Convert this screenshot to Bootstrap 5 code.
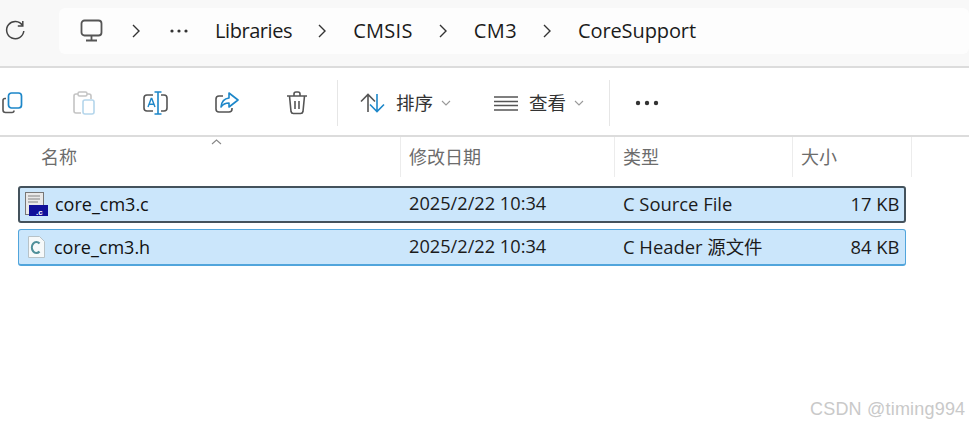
<!DOCTYPE html>
<html lang="zh">
<head>
<meta charset="utf-8">
<title>CoreSupport</title>
<link href="https://cdn.jsdelivr.net/npm/bootstrap@5.3.0/dist/css/bootstrap.min.css" rel="stylesheet">
<style>
html,body{width:969px;height:425px;overflow:hidden;background:#fff;}
body{font-family:"Open Sans","Noto Sans CJK SC",sans-serif;color:#1b1b1b;position:relative;}
svg{display:block;flex:none;fill:none;}
.topbar{background:#f8f8f8;border-bottom:2px solid #dcdcdc;padding:8px 0 0 4px;box-sizing:content-box;height:58px;}
.crumbs{margin-left:33px;width:910px;height:46px;background:#fdfdfd;border-radius:6px;padding-left:21px;font-size:20px;letter-spacing:-.1px;}
.ml2{margin-left:2px}.ml8{margin-left:8px}.ml11{margin-left:11px}.ml22{margin-left:22px}.ml25{margin-left:25px}.ml26{margin-left:26px}.ml27{margin-left:27px}.ml28{margin-left:28px}.ml29{margin-left:29px}.ml30{margin-left:30px}.ml43{margin-left:43px}.ml47{margin-left:47px}.ml48{margin-left:48px}.ml50{margin-left:50px}
.w-lib{letter-spacing:-.43px}.w-cmsis{letter-spacing:.3px}.w-cm3{letter-spacing:.4px}
.tools{height:69px;border-bottom:2px solid #dcdcdc;font-size:18.5px;color:#333;padding-top:3px;}
.vsep{width:1px;height:46px;background:#e6e6e6;}
.head{height:40px;font-size:18px;color:#6c6c6c;position:relative;}
.hcell{height:40px;border-right:1px solid #ececec;padding-left:8px;line-height:40px;}
.c1{width:401px;padding-left:41px}.c2{width:214px}.c3{width:178px}.c4{width:119px}
.sort-mark{position:absolute;left:211px;top:2px;}
.files{padding:9px 0 0 18px;}
.file{width:888px;height:37px;background:#cbe6fb;border:1px solid #51a5dc;border-bottom-width:2px;border-radius:3px;margin-bottom:6px;font-size:18.4px;color:#1b1b1b;line-height:33px;}
.file.focused{border:2px solid #44525c;line-height:31px;}
.n1{width:390px;color:#111;}
.focused .n1{width:389px;padding-left:5px}
.file:not(.focused) .n1{padding-left:9px}
.n2{width:214px;font-size:18.2px}.n3{width:178px}.n4{width:98.5px;text-align:right;}
.fname{font-size:18px;margin-left:9px}
.focused .fname{margin-left:7px}
.watermark{position:absolute;left:810px;top:396px;font-family:"Liberation Sans",sans-serif;font-size:18px;color:#c9c9c9;letter-spacing:.2px;white-space:nowrap;}
</style>
</head>
<body>
<div class="topbar d-flex align-items-start">
  <svg class="mt-2" width="22" height="30" viewBox="0 0 22 30"><path d="M18.5 9.5A8.6 8.6 0 1 0 19.8 15" stroke="#444" stroke-width="1.5"/><path d="M18.800 5v5h-5" stroke="#444" stroke-width="1.5"/></svg>
  <div class="crumbs d-flex align-items-center">
    <svg width="24" height="24" viewBox="0 0 24 24"><rect x="1.500" y="1.500" width="20" height="15" rx="3" stroke="#555" stroke-width="1.800"/><path d="M11.500 17v4M6 21.500h11" stroke="#555" stroke-width="1.800"/></svg>
    <svg class="ml28" width="8" height="14" viewBox="0 0 8 14"><path d="M1 1l6 6-6 6" stroke="#333" stroke-width="1.400"/></svg>
    <svg class="ml30" width="18" height="4" viewBox="0 0 18 4"><circle cx="2" cy="2" r="1.600" fill="#333"/><circle cx="9" cy="2" r="1.600" fill="#333"/><circle cx="16" cy="2" r="1.600" fill="#333"/></svg>
    <span class="ml27 w-lib">Libraries</span>
    <svg class="ml26" width="8" height="14" viewBox="0 0 8 14"><path d="M1 1l6 6-6 6" stroke="#333" stroke-width="1.400"/></svg>
    <span class="ml27 w-cmsis">CMSIS</span>
    <svg class="ml26" width="8" height="14" viewBox="0 0 8 14"><path d="M1 1l6 6-6 6" stroke="#333" stroke-width="1.400"/></svg>
    <span class="ml27 w-cm3">CM3</span>
    <svg class="ml26" width="8" height="14" viewBox="0 0 8 14"><path d="M1 1l6 6-6 6" stroke="#333" stroke-width="1.400"/></svg>
    <span class="ml27">CoreSupport</span>
  </div>
</div>
<div class="tools d-flex align-items-center">
  <svg class="ml2" width="21" height="22" viewBox="0 0 21 22"><path d="M4 6.500H3a2 2 0 0 0-2 2V18a2.500 2.500 0 0 0 2.500 2.500H10a2 2 0 0 0 2-2" stroke="#555" stroke-width="1.600"/><rect x="6.500" y="1" width="13" height="15" rx="3" stroke="#1d87c9" stroke-width="1.700"/></svg>
  <svg class="ml50" width="22" height="24" viewBox="0 0 22 24"><path d="M5 3H3a2 2 0 0 0-2 2v15a2 2 0 0 0 2 2h5M14 3h2a2 2 0 0 1 2 2v3" stroke="#c4c4c4" stroke-width="1.600"/><rect x="5" y="1" width="9" height="4" rx="1.500" stroke="#c4c4c4" stroke-width="1.500"/><rect x="10" y="9" width="11" height="14" rx="2" stroke="#b5d6ec" stroke-width="1.600"/></svg>
  <svg class="ml48" width="25" height="24" viewBox="0 0 25 24"><path d="M10 4H4a3 3 0 0 0-3 3v10a3 3 0 0 0 3 3h6M18 4h3a3 3 0 0 1 3 3v10a3 3 0 0 1-3 3h-3" stroke="#555" stroke-width="1.600"/><path d="M15 1v22M11.500 1h7M11.500 23h7" stroke="#1d87c9" stroke-width="1.600"/><path d="M5 16l3.200-8.500h.6L12 16M6.200 13.200h4.600" stroke="#1d87c9" stroke-width="1.400"/></svg>
  <svg class="ml47" width="24" height="22" viewBox="0 0 24 22"><path d="M8 4H4a3 3 0 0 0-3 3v10a3 3 0 0 0 3 3h10a3 3 0 0 0 3-3v-1" stroke="#555" stroke-width="1.600"/><path d="M14 1l9 7-9 7v-4c-4 0-6 1-8 4 .5-5 3-8.500 8-9z" stroke="#1d87c9" stroke-width="1.600" stroke-linejoin="round"/></svg>
  <svg class="ml47" width="22" height="24" viewBox="0 0 22 24"><path d="M1 5h20M8 4.500V3a2 2 0 0 1 2-2h2a2 2 0 0 1 2 2v1.500M3.500 5l1.500 15.500a2.500 2.500 0 0 0 2.500 2h7a2.500 2.500 0 0 0 2.500-2L18.500 5M9 10v8M13 10v8" stroke="#555" stroke-width="1.600"/></svg>
  <div class="vsep ml29"></div>
  <svg class="ml22" width="25" height="20" viewBox="0 0 25 20"><path d="M8 19V1.500M1 8.500l7-7 7 7" stroke="#555" stroke-width="1.600"/><path d="M17 1v17.500M10 11.500l7 7 7-7" stroke="#1d87c9" stroke-width="1.600"/></svg>
  <span class="ml11">排序</span>
  <svg class="ml8" width="10" height="6" viewBox="0 0 10 6"><path d="M1 1l4 4 4-4" stroke="#999" stroke-width="1.100"/></svg>
  <svg class="ml43" width="24" height="15" viewBox="0 0 24 15"><path d="M0 1h24M0 5.500h24M0 9.500h24M0 14h24" stroke="#555" stroke-width="1.300"/></svg>
  <span class="ml11">查看</span>
  <svg class="ml8" width="10" height="6" viewBox="0 0 10 6"><path d="M1 1l4 4 4-4" stroke="#999" stroke-width="1.100"/></svg>
  <div class="vsep ml25"></div>
  <svg class="ml25" width="24" height="6" viewBox="0 0 24 6"><circle cx="3" cy="3" r="2.200" fill="#333"/><circle cx="12" cy="3" r="2.200" fill="#333"/><circle cx="21" cy="3" r="2.200" fill="#333"/></svg>
</div>
<div class="head d-flex">
  <svg class="sort-mark" width="11" height="6" viewBox="0 0 11 6"><path d="M1 5l4.500-4L10 5" stroke="#888" stroke-width="1.100"/></svg>
  <div class="hcell c1">名称</div>
  <div class="hcell c2">修改日期</div>
  <div class="hcell c3">类型</div>
  <div class="hcell c4">大小</div>
</div>
<div class="files">
  <div class="file focused d-flex">
    <div class="n1 d-flex align-items-center">
      <svg width="23" height="25" viewBox="0 0 23 25"><rect x=".5" y=".5" width="18" height="22" fill="#e9e9e9" stroke="#777"/><path d="M3 4h12M3 7h12M3 10h10" stroke="#a5a5a5" stroke-width="1.500"/><rect x="4" y="13" width="19" height="11" fill="#10109a"/><text x="11" y="22.500" font-size="8" font-weight="700" fill="#fff" font-family="Liberation Sans">.c</text></svg>
      <span class="fname">core_cm3.c</span>
    </div>
    <div class="n2">2025/2/22 10:34</div>
    <div class="n3">C Source File</div>
    <div class="n4">17 KB</div>
  </div>
  <div class="file d-flex">
    <div class="n1 d-flex align-items-center">
      <svg width="17" height="22" viewBox="0 0 17 22"><path d="M.5.5h11l5 5v16H.5z" fill="#f6f9fa" stroke="#b7c2c7"/><path d="M11.500 7.500a4.500 5.500 0 1 0 0 8" stroke="#4f8f99" stroke-width="2.200"/></svg>
      <span class="fname">core_cm3.h</span>
    </div>
    <div class="n2">2025/2/22 10:34</div>
    <div class="n3">C Header 源文件</div>
    <div class="n4">84 KB</div>
  </div>
</div>
<div class="watermark">CSDN @timing994</div>
<script src="https://cdn.jsdelivr.net/npm/bootstrap@5.3.0/dist/js/bootstrap.bundle.min.js"></script>
</body>
</html>
